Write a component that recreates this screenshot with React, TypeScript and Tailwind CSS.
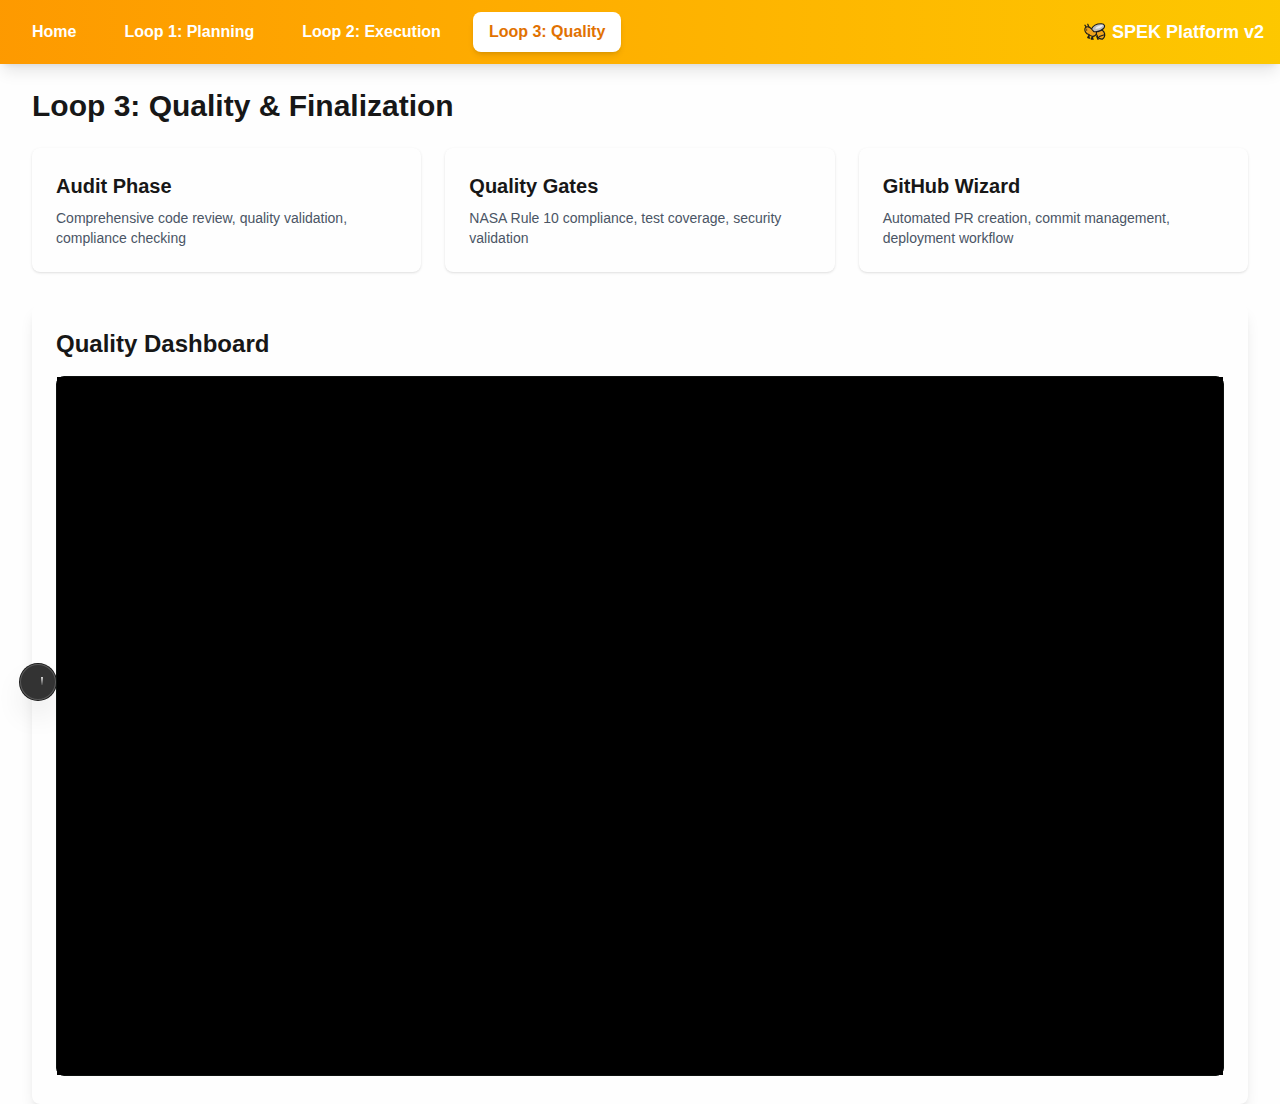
const links = ['Home', 'Loop 1: Planning', 'Loop 2: Execution', 'Loop 3: Quality'];

const cards = [
  { title: 'Audit Phase', text: 'Comprehensive code review, quality validation, compliance checking' },
  { title: 'Quality Gates', text: 'NASA Rule 10 compliance, test coverage, security validation' },
  { title: 'GitHub Wizard', text: 'Automated PR creation, commit management, deployment workflow' },
];

function Bee() {
  return (
    <svg className="h-[18px] w-[22px]" viewBox="0 0 22 18" fill="none" strokeLinecap="round" strokeLinejoin="round">
      <path d="M5.5 12 4 14.500l1.500.5M9 13 7.500 16H9M13 13.500l1 2.500" stroke="#1b1b1b" strokeWidth="1.700" />
      <path d="M.9 2.200 2.500 4.500M3.800 1.200 4.800 4" stroke="#1b1b1b" strokeWidth="1.200" />
      <path d="M12 7.500c4-2 8-.3 8.600 3.200.4 2.300-.6 4.500-2.300 5.500-1.500.1-3.200-.6-4.300-2-1.500-1.800-2.300-4-2-6.700z" fill="#f0a41c" stroke="#1b1b1b" strokeWidth="1.200" />
      <path d="M15.500 13.500c1.500-.8 3.200-1.500 5-1.800" stroke="#1b1b1b" strokeWidth="1.100" />
      <path d="M1.300 4.800C2.800 3.300 5.500 3.500 7 5.500c3.200 0 5.500 1.800 5.500 4.300 0 2.300-2 3.600-4.300 3.400-1.400-.1-2.500-.7-3.200-1.700C1.800 11 0 7.500 1.300 4.800z" fill="#f0a41c" stroke="#1b1b1b" strokeWidth="1.100" />
      <path d="M2.700 6v1.500" stroke="#6b4710" strokeWidth="1" />
      <path d="M7.500 6C9 2.500 13 .6 17.500.7c3.200.1 3.900 2.800 2 4.800C17.300 7.700 13 9.200 9.800 8.600z" fill="#bfbfbf" stroke="#1b1b1b" strokeWidth="1.100" />
      <path d="M11 5.600C12.800 3.300 15.500 2 19 2c-.8 2.700-4.500 4-8 3.600z" fill="#ececec" />
    </svg>
  );
}

export default function App() {
  return (
    <div className="h-[1104px] overflow-hidden bg-[#fefefe] font-['Liberation_Sans',Arial,sans-serif] text-[#171717]">
      <nav className="relative flex h-16 items-center justify-between bg-linear-to-r from-amber-500 to-yellow-400 px-4 shadow-lg">
        <div className="flex gap-4">
          {links.map((label, i) => (
            <a
              key={label}
              className={
                i === 3
                  ? 'rounded-lg bg-white px-4 py-2 font-semibold text-amber-600 shadow-md'
                  : 'rounded-lg px-4 py-2 font-semibold text-white'
              }
            >
              {label}
            </a>
          ))}
        </div>
        <div className="flex items-center gap-[6px] text-lg font-bold text-white">
          <Bee />
          <span>SPEK Platform v2</span>
        </div>
      </nav>
      <main className="px-8 pt-6">
        <h1 className="mb-6 text-3xl font-bold">Loop 3: Quality &amp; Finalization</h1>
        <div className="mb-8 grid grid-cols-3 gap-6">
          {cards.map((card) => (
            <div key={card.title} className="rounded-lg bg-[#fefefe] p-6 shadow-sm">
              <h3 className="mb-2 text-xl font-semibold">{card.title}</h3>
              <p className="text-sm text-gray-600">{card.text}</p>
            </div>
          ))}
        </div>
        <section className="relative h-[800px] rounded-lg bg-[#fefefe] p-6 shadow-lg">
          <h2 className="mb-4 text-2xl font-semibold">Quality Dashboard</h2>
          <div className="h-[700px] rounded-lg border border-[#0c100e]">
            <div className="h-full bg-black" />
          </div>
          <div className="absolute top-[360px] left-[-12px] h-9 w-9 rounded-full bg-[#333] shadow-[0_0_0_1px_#171717,inset_0_0_0_1px_#5a5a5a,0_16px_32px_-8px_rgba(0,0,0,0.24)] [clip-path:inset(-4px_0px_-60px_-50px)]">
            <div className="absolute top-[13px] left-[21px] h-[8px] w-[2px] bg-linear-to-b from-[#d8d8d8] to-[#444]" />
          </div>
        </section>
      </main>
    </div>
  );
}
